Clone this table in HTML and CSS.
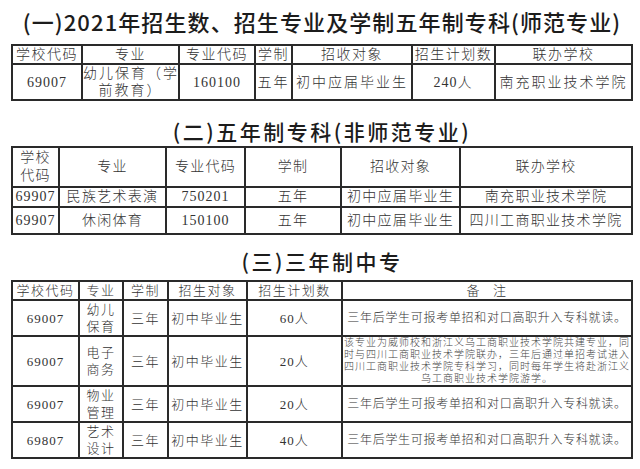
FILE: index.html
```html
<!DOCTYPE html>
<html lang="zh">
<head>
<meta charset="utf-8">
<title>招生专业</title>
<link rel="stylesheet" href="styles.css">
</head>
<body>
<div class="page">
  <h1 class="title title-1">(一)2021年招生数、招生专业及学制五年制专科(师范专业)</h1>
  <table class="grid grid-1">
    <colgroup><col><col><col><col><col><col><col></colgroup>
    <tr class="r-head">
      <th>学校代码</th><th>专业</th><th>专业代码</th><th>学制</th><th>招收对象</th><th>招生计划数</th><th>联办学校</th>
    </tr>
    <tr class="r-data">
      <td class="num">69007</td><td>幼儿保育（学<br>前教育）</td><td class="num">160100</td><td>五年</td><td>初中应届毕业生</td><td><span class="num">240</span>人</td><td>南充职业技术学院</td>
    </tr>
  </table>

  <h2 class="title title-2">(二)五年制专科(非师范专业)</h2>
  <table class="grid grid-2">
    <colgroup><col><col><col><col><col><col></colgroup>
    <tr class="r-head">
      <th>学校<br>代码</th><th>专业</th><th>专业代码</th><th>学制</th><th>招收对象</th><th>联办学校</th>
    </tr>
    <tr class="r-a">
      <td class="num">69907</td><td>民族艺术表演</td><td class="num">750201</td><td>五年</td><td>初中应届毕业生</td><td>南充职业技术学院</td>
    </tr>
    <tr class="r-b">
      <td class="num">69907</td><td>休闲体育</td><td class="num">150100</td><td>五年</td><td>初中应届毕业生</td><td>四川工商职业技术学院</td>
    </tr>
  </table>

  <h2 class="title title-3">(三)三年制中专</h2>
  <table class="grid grid-3">
    <colgroup><col><col><col><col><col><col></colgroup>
    <tr class="r-head">
      <th>学校代码</th><th>专业</th><th>学制</th><th>招生对象</th><th>招生计划数</th><th class="note-head">备<span class="gap"></span>注</th>
    </tr>
    <tr class="r-1">
      <td class="num">69007</td><td>幼儿<br>保育</td><td>三年</td><td>初中毕业生</td><td><span class="num">60</span>人</td><td class="note">三年后学生可报考单招和对口高职升入专科就读。</td>
    </tr>
    <tr class="r-2">
      <td class="num">69007</td><td>电子<br>商务</td><td>三年</td><td>初中毕业生</td><td><span class="num">20</span>人</td><td class="note note-small">该专业为威师校和浙江义乌工商职业技术学院共建专业，同<br>时与四川工商职业技术学院联办，三年后通过单招考试进入<br>四川工商职业技术学院专科学习，同时每年学生将赴浙江义<br>乌工商职业技术学院游学。</td>
    </tr>
    <tr class="r-3">
      <td class="num">69007</td><td>物业<br>管理</td><td>三年</td><td>初中毕业生</td><td><span class="num">20</span>人</td><td class="note">三年后学生可报考单招和对口高职升入专科就读。</td>
    </tr>
    <tr class="r-4">
      <td class="num">69807</td><td>艺术<br>设计</td><td>三年</td><td>初中毕业生</td><td><span class="num">40</span>人</td><td class="note">三年后学生可报考单招和对口高职升入专科就读。</td>
    </tr>
  </table>
</div>
</body>
</html>
```

FILE: styles.css
```css
html, body {
  margin: 0;
  padding: 0;
  background: #ffffff;
}

.page {
  width: 640px;
}

.title {
  margin: 0;
  font-family: "Noto Sans CJK SC", sans-serif;
  font-weight: 500;
  color: #1c1c1c;
  text-align: center;
  white-space: nowrap;
}

.title-1 {
  font-size: 22px;
  letter-spacing: 1.1px;
  line-height: 42px;
  height: 44px;
  padding-left: 4px;
}

.title-2 {
  font-size: 21px;
  letter-spacing: 2.5px;
  line-height: 23px;
  padding: 19px 0 3px 4px;
}

.title-3 {
  font-size: 21px;
  letter-spacing: 2.5px;
  line-height: 23px;
  padding: 15px 0 7px 4px;
}

.grid {
  border-collapse: collapse;
  table-layout: fixed;
  width: 622px;
  margin-left: 11px;
  font-family: "Liberation Serif", "Noto Sans CJK SC", serif;
  color: #333333;
}

.grid th,
.grid td {
  border: 2px solid #2a2a2a;
  padding: 0;
  text-align: center;
  vertical-align: middle;
  font-weight: 300;
  white-space: nowrap;
}

.num {
  letter-spacing: 1px;
}

/* table 1 */
.grid-1 {
  font-size: 14px;
  letter-spacing: 2px;
  line-height: 17px;
}
.grid-1 col:nth-child(1) { width: 70px; }
.grid-1 col:nth-child(2) { width: 97px; }
.grid-1 col:nth-child(3) { width: 76px; }
.grid-1 col:nth-child(4) { width: 37px; }
.grid-1 col:nth-child(5) { width: 120px; }
.grid-1 col:nth-child(6) { width: 83px; }
.grid-1 col:nth-child(7) { width: 137px; }
.grid-1 th { letter-spacing: 1.5px; }
.grid-1 .r-head { height: 18px; }
.grid-1 .r-data { height: 34px; }

/* table 2 */
.grid-2 {
  font-size: 14px;
  letter-spacing: 1.3px;
  line-height: 18px;
}
.grid-2 col:nth-child(1) { width: 47px; }
.grid-2 col:nth-child(2) { width: 107px; }
.grid-2 col:nth-child(3) { width: 79px; }
.grid-2 col:nth-child(4) { width: 96px; }
.grid-2 col:nth-child(5) { width: 119px; }
.grid-2 col:nth-child(6) { width: 172px; }
.grid-2 .r-head { height: 40px; }
.grid-2 .r-a { height: 19px; }
.grid-2 .r-b { height: 27px; }

/* table 3 */
.grid-3 {
  font-size: 13px;
  letter-spacing: 1.5px;
  line-height: 17px;
}
.grid-3 col:nth-child(1) { width: 67px; }
.grid-3 col:nth-child(2) { width: 44px; }
.grid-3 col:nth-child(3) { width: 45px; }
.grid-3 col:nth-child(4) { width: 79px; }
.grid-3 col:nth-child(5) { width: 95px; }
.grid-3 col:nth-child(6) { width: 290px; }
.grid-3 .r-head { height: 16px; }
.grid-3 .r-1 { height: 36px; }
.grid-3 .r-2 { height: 50px; }
.grid-3 .r-3 { height: 35px; }
.grid-3 .r-4 { height: 35px; }

.gap {
  display: inline-block;
  width: 12px;
}

.note {
  font-size: 12px;
  letter-spacing: 0.7px;
}

.note-small {
  font-size: 10px;
  letter-spacing: 1px;
  line-height: 12px;
  color: #444444;
}
```
